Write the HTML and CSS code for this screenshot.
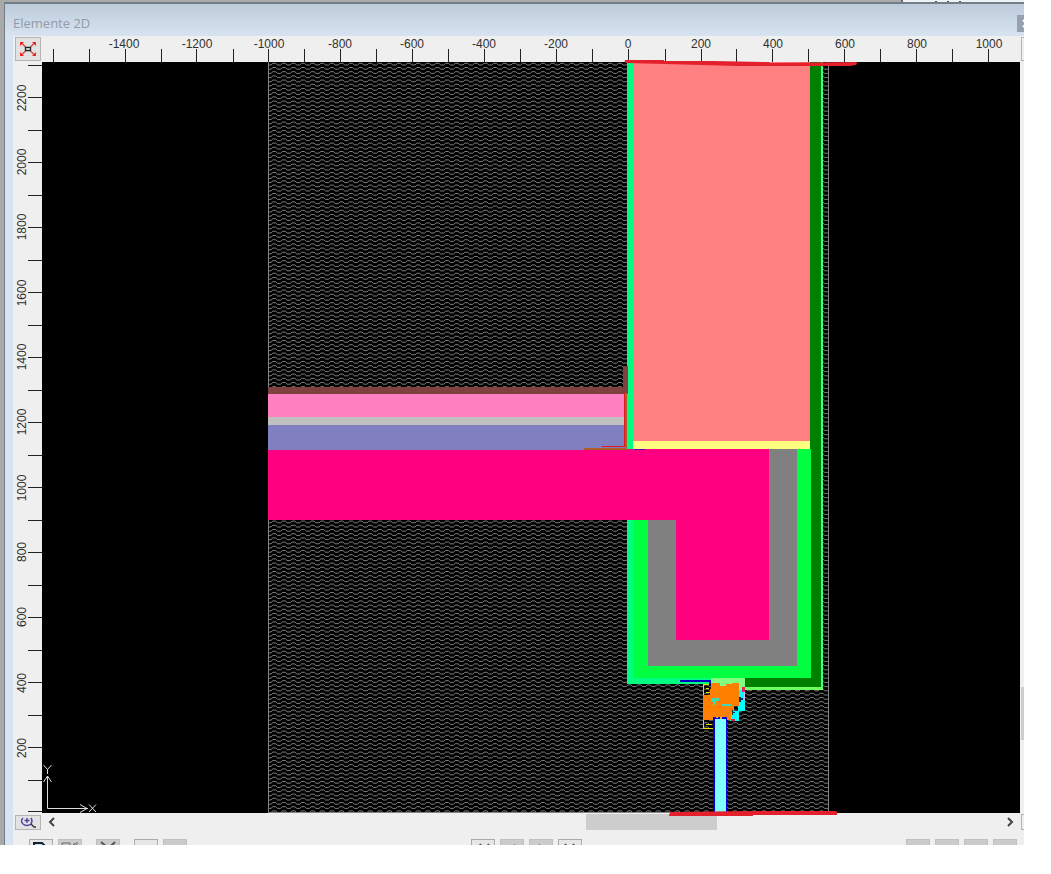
FILE: index.html
```
<!DOCTYPE html>
<html lang="de">
<head>
<meta charset="utf-8">
<title>Elemente 2D</title>
<link rel="stylesheet" href="styles.css">
</head>
<body>
<div class="desktop">
  <div class="backdrop"><div class="backdrop-panel"><i></i><i></i><i></i></div></div>
  <main class="window">
    <header class="titlebar">
      <h1>Elemente 2D</h1>
      <button class="close" aria-label="Close"><svg width="18" height="17"><path d="M6 5l7 7M13 5l-7 7" stroke="#fff" stroke-width="2"/></svg></button>
    </header>
    <div class="view">
      <div class="corner">
        <button class="tool fit" aria-label="Zoom to fit">
          <svg width="18" height="16" viewBox="0 0 18 16" fill="none">
            <path d="M2.500 2l4 4M15.500 2l-4 4M2.500 14l4-4M15.500 14l-4-4" stroke="#d44" stroke-width="1.300"/>
            <path d="M1 1h4l-4 4zM17 1v4l-4-4zM1 15v-4l4 4zM17 15h-4l4-4z" fill="#e22"/>
            <path d="M6.500 6.500h5v3h-5z" fill="#fff" stroke="#222" stroke-width="1.300"/>
          </svg>
        </button>
      </div>
      <svg class="ruler ruler-x" role="img" aria-label="X">
        <g transform="translate(-42 -36)">
          <path class="ticks" d="M53.500 49v13m36-13v13m36-13v13m36-13v13m35-13v13m37-13v13m35-13v13m36-13v13m36-13v13m36-13v13m36-13v13m36-13v13m36-13v13m36-13v13m36-13v13m36-13v13m36-13v13m37-13v13m36-13v13m35-13v13m36-13v13m36-13v13m36-13v13m36-13v13m36-13v13m36-13v13m36-13v13"/>
          <text x="124" y="48">-1400</text><text x="197" y="48">-1200</text><text x="269" y="48">-1000</text>
          <text x="340" y="48">-800</text><text x="412" y="48">-600</text><text x="484" y="48">-400</text><text x="556" y="48">-200</text>
          <text x="628" y="48">0</text><text x="701" y="48">200</text><text x="773" y="48">400</text><text x="845" y="48">600</text>
          <text x="917" y="48">800</text><text x="989" y="48">1000</text>
        </g>
      </svg>
      <div class="edge edge-top"></div>
      <svg class="ruler ruler-y" role="img" aria-label="Y">
        <g transform="translate(-13 -62)">
          <path class="ticks" d="M28 65.500h14m-14 32h14m-14 33h14m-14 32h14m-14 33h14m-14 32h14m-14 33h14m-14 32h14m-14 33h14m-14 32h14m-14 33h14m-14 32h14m-14 33h14m-14 32h14m-14 33h14m-14 32h14m-14 33h14m-14 32h14m-14 33h14m-14 32h14m-14 33h14m-14 32h14m-14 33h14m-14 31h14"/>
          <g transform="rotate(-90)">
            <text x="-98" y="26">2200</text><text x="-162" y="26">2000</text><text x="-227" y="26">1800</text><text x="-293" y="26">1600</text>
            <text x="-357" y="26">1400</text><text x="-422" y="26">1200</text><text x="-488" y="26">1000</text><text x="-552" y="26">800</text>
            <text x="-617" y="26">600</text><text x="-683" y="26">400</text><text x="-748" y="26">200</text>
          </g>
        </g>
      </svg>
      <svg class="canvas" role="img" aria-label="Elemente 2D">
        <defs>
          <pattern id="wave" x="269" y="62" width="48" height="21" patternUnits="userSpaceOnUse">
            <g id="rows" fill="none" stroke="#8c8c8c" stroke-width="0.900" shape-rendering="geometricPrecision">
              <path id="row" d="M0 3h2l1.800-1.700h2.900l1.800 1.700h3.100l1.800-1.700h2.900l1.800 1.700h3.100l1.800-1.700h2.900l1.800 1.700h3.100l1.800-1.700h2.900l1.800 1.700h3.100l1.800-1.700h2.900l1.800 1.700h1.100"/>
              <use href="#row" y="4.200"/><use href="#row" y="8.400"/><use href="#row" y="12.600"/><use href="#row" y="16.800"/>
            </g>
          </pattern>
        </defs>
        <g transform="translate(-42 -62)" shape-rendering="crispEdges">
          <!-- air -->
          <rect x="269" y="62" width="560" height="751" fill="url(#wave)"/>
          <path d="M268.500 62v750.500h560V62" fill="none" stroke="#858585"/>
          <!-- upper wall -->
          <path fill="#00ff80" d="M627 62h6v387h-6z"/>
          <path fill="#ff8080" d="M633 62h177v379H633z"/>
          <path fill="#ffff80" d="M633 441h177v8H633z"/>
          <path fill="#008000" d="M810 62h11v625h-76v-9h65z"/>
          <path fill="#40ff80" d="M821 62h2v628h-2z"/>
          <path fill="#70ff60" d="M745 687h78v3h-78z"/>
          <!-- floor layers -->
          <path fill="#804040" d="M268 387h355v-21h5v28H268z"/>
          <path fill="#ff80c0" d="M268 394h356v23H268z"/>
          <path fill="#c0c0c0" d="M268 417h356v8H268z"/>
          <path fill="#8080c0" d="M268 425h357v25H268z"/>
          <path fill="#b05a28" d="M625 393h2v57h-43v-2h41z"/>
          <path fill="#e01818" d="M624 393h1v54h-23v-1h22z"/>
          <!-- lintel -->
          <path fill="#00ff80" d="M627 520h8v158h76v6h-84z"/>
          <path fill="#00ff40" d="M633 520h15v146h149V449h14v229H633z"/>
          <path fill="#808080" d="M648 520h28v120h93V449h28v217H648z"/>
          <path fill="#ff0080" d="M268 450h359v-1h142v191h-93V520H268z"/>
          <path fill="#6000b0" d="M634 449h11v1h-11z"/>
          <!-- window frame -->
          <path fill="#80ff80" d="M711 678h34v12h-34z"/>
          <path fill="#00ffff" d="M738 690h7v21h-6v10h-9v-10h8z"/>
          <path fill="#0000c0" d="M680 680h31v4h-2v-2h-29z"/>
          <path fill="none" stroke="#e8e000" d="M709 684.500h-5.500v44h11m-7-24v-4m-2-8h4m-4-4h3m-3 36h6"/>
          <path fill="#ff8000" d="M711 683h9v3h6v-2h6v-1h7v23h-5v6h-3v8h-4v-3h-13v3h-11v-25h7z"/>
          <path fill="#40d8b0" d="M711 698h8v3h-3v4h-3v-3h-2zM722 704h9v2h-9z"/>
          <path fill="#083848" d="M739 697h2v1h2v2h-2v2h-2zM732 710h1v2h2v1h-2v2h-1z"/>
          <path fill="#e02060" d="M742 687h3v5h-3zM731 719h4v2h-4z"/>
          <path fill="#d0c0ff" d="M744 692h1v8h-1zM737 713h1v7h-1z"/>
          <!-- glazing -->
          <path fill="#0000d0" d="M713 717h14v96h-14z"/>
          <path fill="#80ffff" d="M715 719h11v94h-11z"/>
          <path fill="#f0b040" d="M716 717h2v1h-2zM720 717h2v2h-2z"/>
          <!-- axes -->
          <g shape-rendering="auto" fill="none" stroke="#ddd" stroke-width="1">
            <path d="M47.500 776v32.500H88M43.500 782l4-6 4 6M80 804.500l7 4-7 4"/>
            <path d="M43.500 765l4 4.500 4-4.500M47.500 769.500v4.500M89 804.500l7 7.500M96 804.500l-7 7.500"/>
          </g>
          <!-- section marks -->
          <g shape-rendering="auto" fill="#e3202b">
            <path d="M625 60h39v1l48 0 57 1 1 1 86-1q2 1 0 3l-6 1H738l-73-2-39-1q-2-1-1-3z"/>
            <path d="M670 812l83-1h82q3 0 2 4h-84v1h-84z"/>
          </g>
        </g>
      </svg>
      <div class="vscroll"><span></span></div>
      <div class="corner corner-bottom">
        <button class="tool" aria-label="Zoom">
          <svg width="18" height="12" viewBox="0 0 18 12" fill="none" stroke="#5040a0" stroke-width="1.400"><path d="M4 1q-3 3 0 6 4 3 8 0 2-3 0-6M8 1v5M5.500 3.500h5"/><path d="M12 7l3 3h2" stroke="#334"/></svg>
        </button>
      </div>
      <div class="hscroll">
        <button class="arrow" aria-label="Left"><svg width="9" height="10"><path d="M7 1L3 5l4 4" fill="none" stroke="#444" stroke-width="2"/></svg></button>
        <div class="track"><span class="thumb"></span></div>
        <button class="arrow" aria-label="Right"><svg width="9" height="10"><path d="M2 1l4 4-4 4" fill="none" stroke="#444" stroke-width="2"/></svg></button>
      </div>
      <div class="edge edge-bottom"></div>
    </div>
    <footer class="toolbar">
      <div class="group">
        <button class="btn light" aria-label="New"><svg width="22" height="12"><path d="M4 12V3h8l4 4v5" fill="#cde" stroke="#123" stroke-width="2"/></svg></button>
        <button class="btn" aria-label="Edit"><svg width="22" height="12"><path d="M3 12V3h8v9M12 7l4-4v8M18 2v5" fill="none" stroke="#666" stroke-width="1"/></svg></button>
        <button class="btn spaced" aria-label="Delete"><svg width="22" height="12"><path d="M4 2l12 10M18 2L8 12" fill="none" stroke="#555" stroke-width="2"/></svg></button>
        <button class="btn light spaced" aria-label="Option 1"></button>
        <button class="btn" aria-label="Option 2"></button>
      </div>
      <div class="group middle">
        <button class="btn light" aria-label="First"><svg width="22" height="12"><path d="M9 4l-4 5M17 4l-4 5" stroke="#555" stroke-width="2"/></svg></button>
        <button class="btn" aria-label="Previous"><svg width="22" height="12"><path d="M14 4l-4 5" stroke="#777"/></svg></button>
        <button class="btn" aria-label="Next"><svg width="22" height="12"><path d="M9 4l4 5" stroke="#777"/></svg></button>
        <button class="btn light" aria-label="Last"><svg width="22" height="12"><path d="M6 4l4 5M14 4l4 5" stroke="#555" stroke-width="2"/></svg></button>
      </div>
      <div class="group">
        <button class="btn" aria-label="Action 1"></button><button class="btn" aria-label="Action 2"></button>
        <button class="btn" aria-label="Action 3"></button><button class="btn" aria-label="Action 4"></button>
      </div>
    </footer>
  </main>
</div>
</body>
</html>
```
FILE: styles.css
```
* { box-sizing: border-box; }
html, body { height: 100%; }
body {
  margin: 0;
  padding: 0 27px 29px 0;
  background: #fff;
  font-family: "Liberation Sans", Arial, sans-serif;
  font-size: 12px;
}
button { margin: 0; padding: 0; border: 0; background: none; font: inherit; }
svg { display: block; }
.desktop {
  display: flex;
  flex-direction: column;
  height: 100%;
  padding-left: 4px;
  background: #a9a9a9;
  overflow: hidden;
}
.backdrop { display: flex; justify-content: flex-end; height: 2px; flex: none; }
.backdrop-panel {
  display: flex;
  gap: 10px;
  width: 123px;
  padding: 1px 0 0 32px;
  border-left: 2px solid #666c72;
  background: #eef2f6;
}
.backdrop-panel i { width: 2px; height: 1px; background: #555; }
.window {
  display: flex;
  flex-direction: column;
  flex: 1;
  min-height: 0;
  border-top: 2px solid #737d87;
  border-left: 1px solid #737d87;
  background: #efefef;
}
.titlebar {
  display: flex;
  justify-content: space-between;
  align-items: center;
  flex: none;
  height: 32px;
  padding: 6px 0 0 8px;
  background: linear-gradient(#bdcbda, #d7e3f1);
  overflow: hidden;
}
.titlebar h1 {
  margin: 0;
  font: 13px/18px "Open Sans", sans-serif;
  color: #929ba7;
}
.close { flex: none; width: 18px; height: 17px; margin-right: -11px; background: #97a0ae; }
.view {
  display: grid;
  grid-template-columns: 29px minmax(0, 1fr) 4px;
  grid-template-rows: 26px minmax(0, 1fr) 18px;
  flex: 1;
  min-height: 0;
  border-left: 8px solid #d7e3f3;
}
.corner { padding: 1px 0 0 2px; }
.tool {
  display: flex;
  align-items: center;
  justify-content: center;
  width: 26px;
  height: 24px;
  border: 1px solid #b4b4b4;
  background: #e2e2e2;
}
.corner-bottom { padding-top: 2px; }
.corner-bottom .tool { height: 15px; }
.ruler { width: 100%; height: 100%; }
.ruler text { fill: #303030; text-anchor: middle; }
.ticks { fill: none; stroke: #222; }
.canvas { width: 100%; height: 100%; overflow: visible; background: #000; z-index: 1; }
.edge-top, .edge-bottom { margin: 1px 0 1px 1px; border: 1px solid #b4b4b4; border-right: 0; }
.vscroll { display: flex; flex-direction: column; padding-left: 1px; }
.vscroll::before { content: ""; flex: 625; }
.vscroll::after { content: ""; flex: 73; }
.vscroll span { flex: 53; background: #cdcdcd; }
.hscroll { display: flex; align-items: stretch; padding: 1px 0; }
.arrow { display: flex; align-items: center; justify-content: center; flex: none; width: 19px; }
.track { display: flex; flex: 1; }
.track::before { content: ""; flex: 525; }
.track::after { content: ""; flex: 284; }
.thumb { flex: 131; background: #cdcdcd; }
.toolbar {
  display: flex;
  justify-content: space-between;
  flex: none;
  height: 14px;
  padding: 8px 7px 0 16px;
  border-left: 8px solid #d7e3f3;
  overflow: hidden;
}
.group { display: flex; gap: 5px; }
.middle { margin-right: 40px; }
.btn {
  display: flex;
  align-items: flex-start;
  flex: none;
  width: 24px;
  height: 24px;
  border: 1px solid #c0c0c0;
  background: #cbcbcb;
}
.light { border-color: #aaa; background: #e6e6e6; }
.spaced { margin-left: 9px; }
```
